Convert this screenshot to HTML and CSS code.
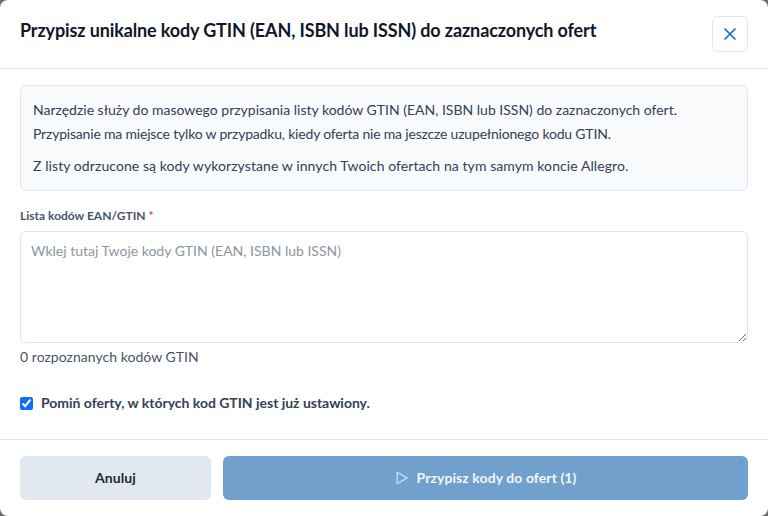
FILE: index.html
```html
<!DOCTYPE html>
<html lang="pl">
<head>
    <meta charset="UTF-8">
    <title>Przypisz kody GTIN</title>
    <link rel="stylesheet" href="styles.css">
</head>
<body>
    <div class="modal">
        <div class="modal-header">
            <h2 class="modal-title">Przypisz unikalne kody GTIN (EAN, ISBN lub ISSN) do zaznaczonych ofert</h2>
            <button class="close-btn" aria-label="Zamknij">
                <svg width="14" height="14" viewBox="0 0 14 14" fill="none" stroke="#1f6bb5" stroke-width="1.7">
                    <path d="M1.5 1.5 12.5 12.5M12.5 1.5 1.5 12.5"/>
                </svg>
            </button>
        </div>

        <div class="modal-body">
            <div class="info-box">
                <p>Narzędzie służy do masowego przypisania listy kodów GTIN (EAN, ISBN lub ISSN) do zaznaczonych ofert.</p>
                <p class="info-second">Przypisanie ma miejsce tylko w przypadku, kiedy oferta nie ma jeszcze uzupełnionego kodu GTIN.</p>
                <p class="info-last">Z listy odrzucone są kody wykorzystane w innych Twoich ofertach na tym samym koncie Allegro.</p>
            </div>

            <label class="field-label" for="codes">Lista kodów EAN/GTIN <span class="required">*</span></label>
            <textarea id="codes" class="codes-input" placeholder="Wklej tutaj Twoje kody GTIN (EAN, ISBN lub ISSN)"></textarea>
            <div class="codes-count">0 rozpoznanych kodów GTIN</div>

            <label class="skip-row">
                <input type="checkbox" class="skip-check" checked>
                <span>Pomiń oferty, w których kod GTIN jest już ustawiony.</span>
            </label>
        </div>

        <div class="modal-footer">
            <button class="btn btn-cancel">Anuluj</button>
            <button class="btn btn-submit">
                <svg class="play-icon" width="14" height="14" viewBox="0 0 14 14" fill="none" stroke="#d5e3f0" stroke-width="1.2">
                    <path d="M2.1 1.2 12 7 2.1 12.8Z"/>
                </svg>
                Przypisz kody do ofert (1)
            </button>
        </div>
    </div>
</body>
</html>
```

FILE: styles.css
```css
* {
    box-sizing: border-box;
}

html, body {
    height: 100%;
}

body {
    margin: 0;
    background: #6f6f73;
    font-family: Lato, "Liberation Sans", sans-serif;
    overflow: hidden;
}

.modal {
    height: 516px;
    background: white;
    border-radius: 8px;
    color: #334155;
}

.modal-header {
    height: 69px;
    padding: 16px 20px 0;
    display: flex;
    justify-content: space-between;
    align-items: flex-start;
    border-bottom: 1px solid #dbe8f4;
}

.modal-title {
    margin: 0;
    font-size: 18px;
    line-height: 28px;
    font-weight: 700;
    letter-spacing: -0.13px;
    color: #0f172a;
}

.close-btn {
    width: 36px;
    height: 36px;
    padding: 0;
    background: white;
    border: 1px solid #dbe8f4;
    border-radius: 6px;
    display: flex;
    align-items: center;
    justify-content: center;
}

.modal-body {
    height: 371px;
    padding: 16px 20px 0;
    border-bottom: 1px solid #e2e8f0;
}

.info-box {
    height: 106px;
    padding: 12px;
    background: #f8fafc;
    border: 1px solid #dbe8f4;
    border-radius: 6px;
    font-size: 14px;
    line-height: 24px;
}

.info-box p {
    margin: 0;
}

.info-second {
    letter-spacing: -0.19px;
}

.info-last {
    padding-top: 8px;
    letter-spacing: 0.08px;
}

.field-label {
    display: block;
    margin-top: 16px;
    font-size: 12px;
    line-height: 18px;
    font-weight: 700;
    color: #475569;
}

.required {
    color: #ef4444;
}

.codes-input {
    display: block;
    width: 100%;
    height: 112px;
    margin-top: 6px;
    padding: 9px 10px;
    border: 1px solid #dbe8f4;
    border-radius: 6px;
    font-family: inherit;
    font-size: 14px;
    line-height: 20px;
    color: #334155;
    outline: none;
}

.codes-input::placeholder {
    color: #8b95a3;
    opacity: 1;
}

.codes-count {
    margin-top: 4px;
    font-size: 14px;
    line-height: 20px;
    letter-spacing: 0.04px;
    color: #475569;
}

.skip-row {
    display: flex;
    align-items: center;
    gap: 8px;
    margin-top: 26px;
    font-size: 14px;
    line-height: 20px;
    font-weight: 700;
    letter-spacing: -0.02px;
    color: #334155;
}

.skip-check {
    width: 13px;
    height: 13px;
    margin: 0;
    accent-color: #0d6efd;
}

.modal-footer {
    display: flex;
    gap: 12px;
    padding: 16px 20px;
}

.btn {
    height: 44px;
    padding: 0 0 2px;
    border: none;
    border-radius: 6px;
    font-family: inherit;
    font-size: 14px;
    font-weight: 700;
    letter-spacing: 0.08px;
    display: flex;
    align-items: center;
    justify-content: center;
}

.btn-cancel {
    width: 191px;
    background: #e2e8f0;
    color: #1e293b;
}

.btn-submit {
    flex: 1;
    gap: 8px;
    background: #72a0cd;
    color: #f1f6fb;
}

.play-icon {
    margin-top: 2px;
}
```
